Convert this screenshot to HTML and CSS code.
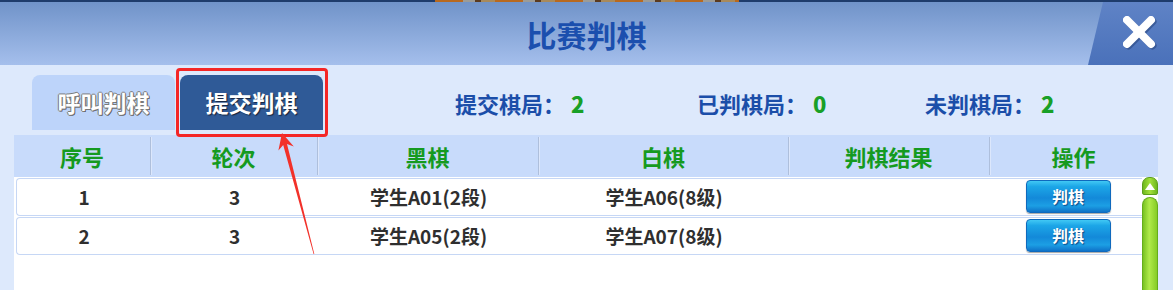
FILE: index.html
```html
<!DOCTYPE html>
<html lang="zh-CN">
<head>
    <meta charset="UTF-8">
    <title>比赛判棋</title>
    <link rel="stylesheet" href="styles.css">
</head>
<body>
    <div class="dialog">
        <div class="topline"><span class="topline-art"></span></div>
        <div class="titlebar">
            <span></span>
            <h1 class="title">比赛判棋</h1>
            <a class="close" href="javascript:void(0)">
                <svg width="36" height="36" viewBox="0 0 36 36">
                    <g stroke="#25427a" stroke-opacity="0.55" stroke-width="8" stroke-linecap="round" transform="translate(1.5 1.5)">
                        <line x1="4" y1="4" x2="28" y2="28"/>
                        <line x1="28" y1="4" x2="4" y2="28"/>
                    </g>
                    <g stroke="#fff" stroke-width="8" stroke-linecap="round">
                        <line x1="4" y1="4" x2="28" y2="28"/>
                        <line x1="28" y1="4" x2="4" y2="28"/>
                    </g>
                </svg>
            </a>
        </div>
        <div class="panel">
            <div class="toolbar">
                <ul class="tabs">
                    <li class="tab">呼叫判棋</li>
                    <li class="tab tab-on">提交判棋</li>
                </ul>
                <div class="stats">
                    <p class="stat">提交棋局：<b>2</b></p>
                    <p class="stat">已判棋局：<b>0</b></p>
                    <p class="stat">未判棋局：<b>2</b></p>
                </div>
            </div>
            <div class="grid">
                <div class="grid-head">
                    <span>序号</span>
                    <span>轮次</span>
                    <span>黑棋</span>
                    <span>白棋</span>
                    <span>判棋结果</span>
                    <span>操作</span>
                </div>
                <div class="grid-body">
                    <div class="rows">
                        <div class="row">
                            <span>1</span>
                            <span>3</span>
                            <span>学生A01(2段)</span>
                            <span>学生A06(8级)</span>
                            <span></span>
                            <span><a class="btn" href="javascript:void(0)">判棋</a></span>
                        </div>
                        <div class="row">
                            <span>2</span>
                            <span>3</span>
                            <span>学生A05(2段)</span>
                            <span>学生A07(8级)</span>
                            <span></span>
                            <span><a class="btn" href="javascript:void(0)">判棋</a></span>
                        </div>
                    </div>
                    <div class="scrollbar">
                        <span class="scroll-up"><i></i></span>
                        <span class="scroll-thumb"></span>
                    </div>
                </div>
            </div>
        </div>
        <svg class="arrow" width="50" height="130" viewBox="0 0 50 130">
            <polygon points="12,5 23.8,18.5 17,16.1 44.3,126 43.6,126 13.2,17.1 8.4,22.5" fill="#f2312a"/>
        </svg>
    </div>
</body>
</html>
```

FILE: styles.css
```css
*{margin:0;padding:0;box-sizing:border-box;}
ul{list-style:none;}
a{text-decoration:none;color:#fff;}
html,body{width:1173px;height:290px;overflow:hidden;}
body{font:700 19px/1 "Noto Sans CJK SC","Noto Sans",sans-serif;background:#dde9fc;}

.dialog{position:relative;height:290px;display:flex;flex-direction:column;}
.topline{height:2px;background:#1e3c6c;padding-left:435px;}
.topline-art{display:block;width:304px;height:2px;background:repeating-linear-gradient(90deg,#b8691f 0 28px,#9c9c98 28px 40px,#5a3a20 40px 46px,#a88a5c 46px 60px);}

.titlebar{height:63px;display:grid;grid-template-columns:85px 1fr 85px;background:linear-gradient(#7093c9,#a5bfec);}
.title{align-self:center;text-align:center;font-size:30px;font-weight:700;color:#1b4fae;}
.close{display:flex;align-items:center;justify-content:flex-end;padding-right:14px;background:linear-gradient(#5f83c6,#4a71ba);clip-path:polygon(15px 0,100% 0,100% 100%,0 100%);}

.panel{flex:1;display:flex;flex-direction:column;padding:0 15px 0 14px;}
.toolbar{height:70px;display:flex;padding-top:10px;}
.tabs{display:flex;margin-left:18px;}
.tab{width:143px;height:55px;line-height:55px;text-align:center;font-size:23px;color:#fff;border-radius:8px 8px 0 0;background:#bdd4fa;text-shadow:-1px 0 #7a7a7a,1px 0 #7a7a7a,0 -1px #7a7a7a,0 1px #7a7a7a,1px 1px #555;}
.tab-on{position:relative;margin-left:5px;background:#2f5a97;text-shadow:1px 1px 1px #17243d;}
.tab-on::after{content:"";position:absolute;top:-7px;right:-5px;bottom:-7px;left:-4px;border:3px solid #f42626;border-radius:4px;}

.stats{display:grid;grid-template-columns:242px 228px auto;margin-left:132px;height:55px;align-items:center;}
.stat{font-size:22px;color:#1b4ea9;}
.stat b{margin-left:6px;color:#18a027;}

.grid{flex:1;display:flex;flex-direction:column;}
.grid-head{display:grid;grid-template-columns:136px 167px 221px 250px 201px 169px;height:42px;align-items:center;text-align:center;background:#c8dbfb;font-size:22px;color:#159a20;}
.grid-head span{line-height:42px;}
.grid-head span+span{background:linear-gradient(90deg,#aebfdc 1px,#dce7fc 1px 2px,transparent 2px) left center/2px 38px no-repeat;}

.grid-body{flex:1;display:flex;background:#fff;}
.rows{flex:1;padding:1px 0 0 2px;}
.row{display:grid;grid-template-columns:134px 167px 221px 250px 201px 1fr;height:38px;padding-bottom:2px;margin-bottom:1px;align-items:center;text-align:center;color:#2f2f2f;border:1px solid #c6d7f5;border-right:0;border-radius:4px 0 0 4px;}
.btn{display:inline-block;width:85px;height:33px;margin-left:4px;line-height:31px;font-size:16px;border:1px solid #0f69bd;border-radius:4px;background:linear-gradient(#41c8f4 0,#1ca6e7 18%,#1389d9 55%,#1c9fe4 80%,#0f72c8 100%);box-shadow:0 1px 1px rgba(0,0,0,.35);text-shadow:1px 1px 1px #0b4d8c;}

.scrollbar{width:16px;display:flex;flex-direction:column;}
.scroll-up{height:18px;display:flex;align-items:center;justify-content:center;border:1px solid #5c9f1c;border-radius:7px 7px 2px 2px;background:linear-gradient(90deg,#6eb81e,#a3e03b 50%,#6eb81e);}
.scroll-up i{width:0;height:0;border-left:5px solid transparent;border-right:5px solid transparent;border-bottom:7px solid #fff;}
.scroll-thumb{flex:1;margin-top:2px;border:1px solid #66ad1c;border-bottom:0;border-radius:8px 8px 0 0;background:linear-gradient(90deg,#78c221,#b0ea4a 45%,#86cc27);}

.arrow{position:absolute;left:270px;top:128px;pointer-events:none;}
```
